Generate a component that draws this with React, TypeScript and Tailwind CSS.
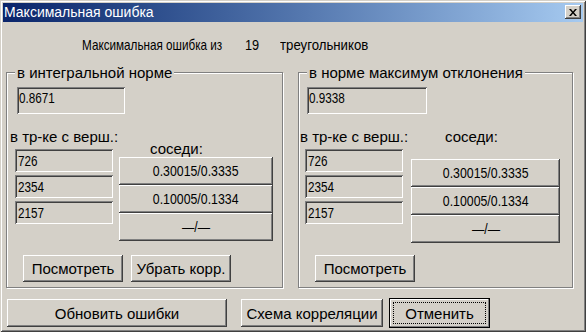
import React from "react";

const RAISED =
  "shadow-[inset_-1px_-1px_0_#404040,inset_1px_1px_0_#ffffff,inset_-2px_-2px_0_#808080,inset_2px_2px_0_#d4d0c8]";
const SUNKEN =
  "shadow-[inset_1px_1px_0_#808080,inset_-1px_-1px_0_#ffffff,inset_2px_2px_0_#404040,inset_-2px_-2px_0_#d4d0c8]";
const SANS = "font-['Liberation_Sans',Arial,sans-serif]";

function Field({ value, cls }: { value: string; cls: string }) {
  return (
    <div className={`bg-[#d4d0c8] ${SUNKEN} ${SANS} text-[15px] leading-[16px] text-black whitespace-nowrap ${cls}`}>
      <span className="inline-block origin-left scale-x-[0.78]">{value}</span>
    </div>
  );
}

function Btn({ children, cls }: { children: React.ReactNode; cls: string }) {
  return (
    <div
      className={`flex items-center justify-center bg-[#d4d0c8] text-black ${RAISED} ${SANS} text-[15px] leading-[17px] whitespace-nowrap ${cls}`}
    >
      {children}
    </div>
  );
}

function NumBtn({ children, cls }: { children: React.ReactNode; cls: string }) {
  return (
    <div
      className={`flex items-center justify-center bg-[#d4d0c8] text-black ${RAISED} ${SANS} text-[14px] leading-[17px] whitespace-nowrap ${cls}`}
    >
      <span className="inline-block origin-center scale-x-[0.88]">{children}</span>
    </div>
  );
}

type GroupProps = {
  legend: string;
  groupW: string;
  value: string;
  fieldCls: string;
  labelCls: string;
  fieldsCls: string;
  sosediCls: string;
  btnColCls: string;
  btnW: string;
  bottom: string[];
};

function Group(p: GroupProps) {
  return (
    <div
      className={`relative ${p.groupW} h-[216px] border border-[#808080] shadow-[1px_1px_0_#ffffff,inset_1px_1px_0_#ffffff] flex flex-col`}
    >
      <span className={`absolute left-[8px] -top-[9px] px-[2px] bg-[#d4d0c8] ${SANS} text-[15px] leading-[17px] text-black`}>
        {p.legend}
      </span>
      <Field value={p.value} cls={`mt-[14px] h-[27px] pt-[3px] pl-[2px] ${p.fieldCls}`} />
      <div className="flex h-[129px]">
        <div className="w-[112px] flex flex-col">
          <div className={`mt-[14px] h-[17px] ${SANS} text-[15px] leading-[17px] text-black whitespace-nowrap ${p.labelCls}`}>
            в тр-ке с верш.:
          </div>
          <div className={`mt-[4px] flex flex-col gap-[3px] ${p.fieldsCls}`}>
            {["726", "2354", "2157"].map((v) => (
              <Field key={v} value={v} cls="w-[98px] h-[23px] pt-[4px] pl-[3px]" />
            ))}
          </div>
        </div>
        <div className="flex flex-col">
          <div className={`h-[17px] ${SANS} text-[15px] leading-[17px] text-black ${p.sosediCls}`}>соседи:</div>
          <div className={`flex flex-col ${p.btnColCls}`}>
            <NumBtn cls={`${p.btnW} h-[28px]`}>0.30015/0.3335</NumBtn>
            <NumBtn cls={`${p.btnW} h-[28px]`}>0.10005/0.1334</NumBtn>
            <NumBtn cls={`${p.btnW} h-[28px]`}>—/—</NumBtn>
          </div>
        </div>
      </div>
      <div className="flex gap-[8px] mt-[12px] ml-[16px]">
        {p.bottom.map((b) => (
          <Btn key={b} cls="w-[100px] h-[27px]">
            {b}
          </Btn>
        ))}
      </div>
    </div>
  );
}

export default function App() {
  return (
    <div
      className={`w-[586px] h-[332px] bg-[#d4d0c8] p-[3px] flex flex-col shadow-[inset_1px_1px_0_#d4d0c8,inset_-1px_-1px_0_#404040,inset_2px_2px_0_#ffffff,inset_-2px_-2px_0_#808080] ${SANS}`}
    >
      {/* title bar */}
      <div className="h-[19px] w-[580px] flex items-start justify-between bg-linear-to-r from-[#0a246a] to-[#a6caf0]">
        <span className={`pl-[1px] pt-[1px] text-white ${SANS} text-[14px] leading-[17px]`}>Максимальная ошибка</span>
        <div className={`mt-[2px] mr-[2px] w-[16px] h-[14px] bg-[#d4d0c8] ${RAISED} flex items-center justify-center`}>
          <svg width="8" height="7" viewBox="0 0 8 7">
            <path d="M0 0h2l2 2.5L6 0h2L5 3.5 8 7H6L4 4.5 2 7H0l3-3.5z" fill="#000" />
          </svg>
        </div>
      </div>

      {/* header */}
      <div className={`mt-[15px] h-[16px] ml-[79px] flex ${SANS} text-[15px] leading-[16px] text-black whitespace-nowrap`}>
        <span className="w-[163px]">
          <span className="inline-block origin-left scale-x-[0.78]">Максимальная ошибка из</span>
        </span>
        <span className="w-[35px]">
          <span className="inline-block origin-left scale-x-[0.85]">19</span>
        </span>
        <span>
          <span className="inline-block origin-left scale-x-[0.88]">треугольников</span>
        </span>
      </div>

      {/* groups */}
      <div className="mt-[19px] ml-[3px] flex gap-[15px]">
        <Group
          legend="в интегральной норме"
          groupW="w-[277px]"
          value="0.8671"
          fieldCls="ml-[10px] w-[108px]"
          labelCls="ml-[3px]"
          fieldsCls="ml-[8px]"
          sosediCls="mt-[26px] ml-[31px]"
          btnColCls="mt-[0px]"
          btnW="w-[154px]"
          bottom={["Посмотреть", "Убрать корр."]}
        />
        <Group
          legend="в норме максимум отклонения"
          groupW="w-[275px]"
          value="0.9338"
          fieldCls="ml-[8px] w-[120px]"
          labelCls="ml-[1px]"
          fieldsCls="ml-[6px]"
          sosediCls="mt-[14px] ml-[34px]"
          btnColCls="mt-[14px]"
          btnW="w-[149px]"
          bottom={["Посмотреть"]}
        />
      </div>

      {/* bottom buttons */}
      <div className="mt-[10px] flex items-start">
        <Btn cls="mt-[1px] ml-[4px] w-[220px] h-[28px]">Обновить ошибки</Btn>
        <Btn cls="mt-[1px] ml-[14px] w-[142px] h-[28px]">Схема корреляции</Btn>
        <div
          className={`ml-[6px] w-[101px] h-[30px] border border-black bg-[#d4d0c8] shadow-[inset_-1px_-1px_0_#808080,inset_1px_1px_0_#ffffff] p-[3px]`}
        >
          <div className={`h-full w-full border border-dotted border-black flex items-center justify-center ${SANS} text-[15px] leading-[17px] text-black`}>
            Отменить
          </div>
        </div>
      </div>
    </div>
  );
}
